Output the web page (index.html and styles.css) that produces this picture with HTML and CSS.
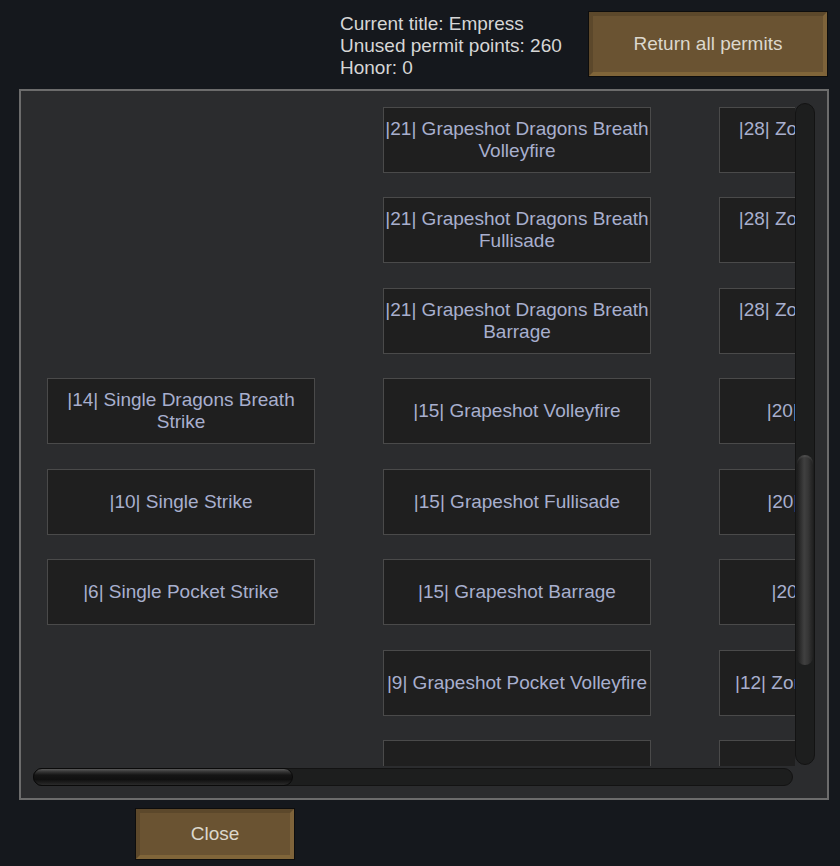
FILE: index.html
```html
<!DOCTYPE html>
<html>
<head>
<meta charset="utf-8">
<link rel="stylesheet" href="styles.css">
</head>
<body>
<div class="screen">
  <header class="header">
    <div class="info">
      <div>Current title: Empress</div>
      <div>Unused permit points: 260</div>
      <div>Honor: 0</div>
    </div>
    <button class="btn btn-return">Return all permits</button>
  </header>

  <section class="panel">
    <div class="viewport">
      <div class="grid">
        <div class="empty"></div>
        <div class="card">|21| Grapeshot Dragons Breath Volleyfire</div>
        <div class="card">|28| Zoned Dragons Breath Volleyfire</div>

        <div class="empty"></div>
        <div class="card">|21| Grapeshot Dragons Breath Fullisade</div>
        <div class="card">|28| Zoned Dragons Breath Fullisade</div>

        <div class="empty"></div>
        <div class="card">|21| Grapeshot Dragons Breath Barrage</div>
        <div class="card">|28| Zoned Dragons Breath Barrage</div>

        <div class="card">|14| Single Dragons Breath Strike</div>
        <div class="card">|15| Grapeshot Volleyfire</div>
        <div class="card">|20| Zoned Volleyfire</div>

        <div class="card">|10| Single Strike</div>
        <div class="card">|15| Grapeshot Fullisade</div>
        <div class="card">|20| Zoned Fullisade</div>

        <div class="card">|6| Single Pocket Strike</div>
        <div class="card">|15| Grapeshot Barrage</div>
        <div class="card">|20| Zoned Barrage</div>

        <div class="empty"></div>
        <div class="card">|9| Grapeshot Pocket Volleyfire</div>
        <div class="card">|12| Zoned Pocket Volleyfire</div>

        <div class="empty"></div>
        <div class="card">|9| Grapeshot Pocket Fullisade</div>
        <div class="card">|12| Zoned Pocket Fullisade</div>
      </div>
    </div>
    <div class="vscroll"><div class="vthumb"></div></div>
    <div class="hscroll"><div class="hthumb"></div></div>
  </section>

  <footer class="footer">
    <button class="btn btn-close">Close</button>
  </footer>
</div>
</body>
</html>
```

FILE: styles.css
```css
html, body {
  margin: 0;
  padding: 0;
  background: #15181d;
}

body {
  width: 840px;
  height: 866px;
  overflow: hidden;
  font-family: "Liberation Sans", Arial, sans-serif;
  font-size: 19px;
}

.screen {
  display: flex;
  flex-direction: column;
}

.header {
  display: flex;
  align-items: flex-start;
  height: 89px;
  padding: 11px 12px 0 340px;
  box-sizing: border-box;
}

.info {
  color: #d6d6d6;
  padding-top: 2px;
  line-height: 21.8px;
}

.btn {
  font-family: "Liberation Sans", Arial, sans-serif;
  font-size: 19px;
  color: #dcd8cd;
  background: #6a5332;
  border-style: solid;
  border-width: 4px;
  border-color: #5c482b #7e633a #806539 #5c482b;
  outline: 1px solid #0d0d0d;
  outline-offset: 0;
  box-sizing: border-box;
  padding: 0;
  cursor: pointer;
}

.btn-return {
  margin-left: auto;
  width: 238px;
  height: 64px;
  margin-top: 1px;
  margin-right: 1px;
}

.panel {
  margin-left: 19px;
  width: 810px;
  height: 711px;
  box-sizing: border-box;
  border: 2px solid #6c6c6c;
  background: #2b2c2e;
  display: grid;
  grid-template-columns: 774px 20px 12px;
  grid-template-rows: 675px 22px 10px;
}

.viewport {
  grid-column: 1;
  grid-row: 1;
  overflow: hidden;
}

.grid {
  display: grid;
  grid-template-columns: repeat(3, 268px);
  grid-auto-rows: 66px;
  column-gap: 68px;
  row-gap: 24.5px;
  padding: 15.7px 0 0 26px;
  width: max-content;
}

.card {
  box-sizing: border-box;
  background: #1f1f1f;
  border: 1px solid #4a4a4a;
  color: #a8afce;
  display: flex;
  align-items: center;
  justify-content: center;
  text-align: center;
  line-height: 21.8px;
  white-space: normal;
}

.vscroll {
  grid-column: 2;
  grid-row: 1;
  margin: 12px 0 1px 0;
  background: #1d1e1e;
  border: 1px solid #131313;
  border-radius: 10px;
  box-sizing: border-box;
  position: relative;
}

.vthumb {
  position: absolute;
  left: 1px;
  right: 1px;
  top: 351px;
  height: 210px;
  border-radius: 8px;
  background: linear-gradient(to right, #1c1c1c 0%, #2c2c2c 20%, #404040 45%, #363636 70%, #202020 100%);
  box-shadow: inset 0 2px 1px rgba(255,255,255,0.08);
}

.hscroll {
  grid-column: 1;
  grid-row: 2;
  margin: 2px 2px 2px 12px;
  background: #1d1e1e;
  border: 1px solid #131313;
  border-radius: 10px;
  box-sizing: border-box;
  position: relative;
}

.hthumb {
  position: absolute;
  left: -1px;
  top: -1px;
  bottom: -1px;
  width: 260px;
  border-radius: 10px;
  border: 1px solid #0a0a0a;
  box-sizing: border-box;
  background: linear-gradient(to bottom, #5a5a5a 0%, #333 18%, #151515 38%, #101010 65%, #1e1e1e 85%, #2a2a2a 100%);
}

.footer {
  padding: 8px 0 0 135px;
}

.btn-close {
  width: 158px;
  height: 50px;
  margin: 1px;
}
```
